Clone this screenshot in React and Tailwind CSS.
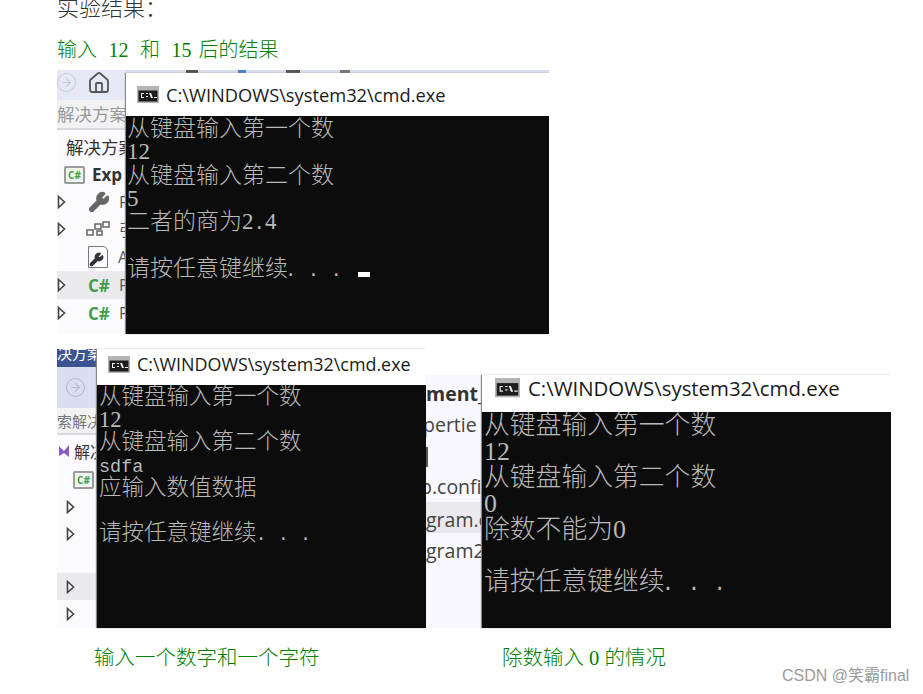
import React from "react";
import { Home, Wrench, ArrowRight } from "lucide-react";

const CJK = '"Noto Sans CJK SC","Noto Sans",sans-serif';

function CmdIcon({ w = 22 }) {
  return (
    <svg width={w} height={(w * 17) / 22} viewBox="0 0 22 17" className="shrink-0">
      <rect x="0" y="0" width="22" height="17" fill="#b4b4b4" />
      <rect x="1.5" y="4.5" width="19" height="11" fill="#1c1c1c" />
      <path d="M4 7h3v1H5v3h2v1H4zM9 7h2v1H9zM9 10h2v1H9zM12 7h2l2 5h-2zM17 11h3v1h-3z" fill="#eee" />
    </svg>
  );
}

function Tri() {
  return (
    <svg width="9" height="14" viewBox="0 0 9 14">
      <path d="M1.5 1.5 L7.5 7 L1.5 12.5 Z" fill="#fff" stroke="#444" strokeWidth="1.6" />
    </svg>
  );
}

function Console({ size, lh, lines, titleH, titleSize, iconW, titlePad, gap, bottom, cursor, pad, ptop }) {
  return (
    <div className="flex flex-col flex-1 min-w-0 bg-white shadow-[-1px_0_1px_#888]">
      <div
        style={{ height: titleH, paddingLeft: titlePad, gap, paddingBottom: bottom }}
        className="flex items-center text-[#1a1a1a] shrink-0 font-['Open_Sans',sans-serif] bg-white"
      >
        <CmdIcon w={iconW} />
        <span style={{ fontSize: titleSize }} className="whitespace-nowrap">C:\WINDOWS\system32\cmd.exe</span>
      </div>
      <div
        style={{ fontSize: size, lineHeight: lh + "px", paddingLeft: pad, paddingTop: ptop }}
        className="flex-1 bg-[#0c0c0c] text-[#b9b9b9] font-['Liberation_Serif','Noto_Sans_CJK_SC',sans-serif] font-light overflow-hidden relative"
      >
        {lines.map((l, i) => (
          <div key={i} style={{ height: lh }} className="whitespace-pre">{l}</div>
        ))}
        {cursor}
      </div>
    </div>
  );
}

function Dots({ size, shift }) {
  return (
    <span style={{ fontSize: size, marginLeft: shift }} className="font-['Liberation_Mono',monospace]">. . .</span>
  );
}

function Row({ h, tri, icon, label, hi, labelCn }) {
  return (
    <div style={{ height: h }} className={"flex items-center whitespace-nowrap overflow-hidden " + (hi ? "bg-[#e9e9ee]" : "")}>
      <span className="w-[9px] shrink-0 flex items-center">{tri && <Tri />}</span>
      {icon}
      {label && <span className={labelCn}>{label}</span>}
    </div>
  );
}

const CSharp = () => (
  <span className="ml-[22px] w-[31px] shrink-0 text-[17px] leading-none font-bold text-[#3f9f4f] font-['Open_Sans',sans-serif]">C#</span>
);

function Box() {
  return (
    <span className="flex items-center justify-center w-[21px] h-[18px] border-2 border-[#9a9a9a] rounded-[2px] bg-[#eef5ee] text-[10px] leading-none font-bold text-[#3f9f4f] font-['Open_Sans',sans-serif] shrink-0">C#</span>
  );
}

const latinLabel = "text-[16px] text-[#555] font-['Open_Sans',sans-serif]";

export default function App() {
  return (
    <div style={{ fontFamily: CJK }} className="relative w-[923px] h-[694px] overflow-hidden bg-white pl-[57px]">
      <p className="h-[19px] -mt-[2px] text-[22px] leading-[22px] text-[#333] font-['Liberation_Serif','Noto_Sans_CJK_SC',serif] font-light">实验结果：</p>
      <p className="mt-[21px] h-[32px] text-[20px] leading-[24px] text-[#008000] font-['Liberation_Serif','Noto_Sans_CJK_SC',serif] font-light whitespace-pre [word-spacing:6.5px]">
        输入 12 和 15<span className="ml-[7px]">后的结果</span>
      </p>

      {/* first capture */}
      <div className="flex w-[492px] h-[264px]">
        <div className="w-[69px] shrink-0 flex flex-col overflow-hidden bg-[#fafaff]">
          <div className="h-[30px] bg-[#e6e9f5] flex items-center gap-[11px] text-[#555] pb-[5px]">
            <span className="w-[19px] h-[19px] rounded-full border border-[#c5c8d6] flex items-center justify-center shrink-0"><ArrowRight size={13} color="#c5c8d6" /></span>
            <Home size={24} strokeWidth={1.8} className="shrink-0" />
          </div>
          <div className="h-[30px] bg-[#f2f2f5] border-b-2 border-[#d8d8de] text-[17.5px] leading-[28px] text-[#999] whitespace-nowrap">解决方案</div>
          <div className="h-[31px] pl-[9px] text-[17.5px] leading-[33px] text-[#333] whitespace-nowrap">解决方案</div>
          <div className="h-[27px] flex items-center pl-[7px] gap-[7px] whitespace-nowrap">
            <Box />
            <span className="text-[17px] font-bold text-[#333] font-['Open_Sans',sans-serif]">Exp</span>
          </div>
          <Row h={27} tri icon={<Wrench size={22} color="#666" fill="#666" className="ml-[22px] mr-[9px] shrink-0" />} label="P" labelCn={latinLabel} />
          <Row h={28} tri icon={
            <svg width="24" height="16" viewBox="0 0 24 16" className="ml-[20px] mr-[9px] shrink-0" fill="none" stroke="#666" strokeWidth="1.5">
              <rect x="1" y="9" width="6" height="5" /><rect x="9" y="3" width="6" height="5" /><rect x="17" y="1" width="6" height="5" /><rect x="11" y="10" width="5" height="4" />
            </svg>
          } label="引" labelCn="text-[16px] text-[#555]" />
          <Row h={28} icon={
            <span className="ml-[22px] mr-[10px] w-[20px] h-[22px] border border-[#777] rounded-tr-[5px] flex items-end shrink-0"><Wrench size={15} color="#333" fill="#333" /></span>
          } label="A" labelCn={latinLabel} />
          <Row h={28} hi tri icon={<CSharp />} label="P" labelCn={latinLabel} />
          <Row h={28} tri icon={<CSharp />} label="P" labelCn={latinLabel} />
        </div>
        <div className="flex-1 min-w-0 flex flex-col">
          <div className="h-[3px] bg-[#d9dcec] shrink-0 flex gap-[40px] pl-[60px]">
            <span className="w-[12px] bg-[#555]" /><span className="w-[8px] bg-[#4a7fd0]" /><span className="w-[14px] bg-[#555]" /><span className="w-[10px] bg-[#777]" />
          </div>
          <Console
            size={23} lh={23.3} titleH={43} titleSize={18.3} iconW={22} titlePad={11} gap={7} bottom={0} pad={1} ptop={1}
            lines={[
              "从键盘输入第一个数", "12", "从键盘输入第二个数", "5",
              <span key="r">二者的商为2<span className="font-['Liberation_Mono',monospace] text-[19px]">.</span>4</span>,
              "",
              <span key="a">请按任意键继续<Dots size={19} shift={-3} /></span>,
            ]}
            cursor={<span className="absolute left-[232px] top-[156px] w-[12px] h-[5px] bg-white" />}
          />
        </div>
      </div>

      {/* second row */}
      <div className="flex mt-[15px] h-[279px]">
        <div className="flex w-[369px] h-full shrink-0">
          <div className="w-[40px] shrink-0 flex flex-col overflow-hidden bg-[#fafaff]">
            <div className="h-[18px] bg-[#3d5390] text-white text-[15px] leading-[8px] whitespace-nowrap overflow-hidden">决方案</div>
            <div className="h-[41px] bg-[#d9def0] flex items-center pl-[9px]">
              <span className="w-[19px] h-[19px] rounded-full border border-[#b3b8cc] flex items-center justify-center"><ArrowRight size={13} color="#b3b8cc" /></span>
            </div>
            <div className="h-[27px] bg-[#f2f2f5] border-b-2 border-[#d8d8de] text-[15px] leading-[26px] text-[#777] whitespace-nowrap">索解决</div>
            <div className="h-[31px] flex items-center gap-[3px] whitespace-nowrap">
              <svg width="14" height="16" viewBox="0 0 14 16" className="shrink-0"><path d="M2 3l5 5 5-6v12l-5-4-5 3z" fill="#8a5cc0" /></svg>
              <span className="text-[16px] text-[#333]">解决</span>
            </div>
            <div className="h-[27px] flex items-center pl-[16px]"><Box /></div>
            <div className="h-[27px] flex items-center pl-[9px]"><Tri /></div>
            <div className="h-[27px] flex items-center pl-[9px]"><Tri /></div>
            <div className="h-[26px]" />
            <div className="h-[27px] flex items-center pl-[9px] bg-[#e9e9ee]"><Tri /></div>
            <div className="h-[28px] flex items-center pl-[9px]"><Tri /></div>
          </div>
          <Console
            size={22.5} lh={22.7} titleH={36} titleSize={17.9} iconW={22} titlePad={11} gap={7} bottom={6} pad={2} ptop={1}
            lines={[
              "从键盘输入第一个数", "12", "从键盘输入第二个数",
              <span key="s" className="font-['Liberation_Mono',monospace] text-[18.5px]">sdfa</span>,
              "应输入数值数据", "",
              <span key="a">请按任意键继续<Dots size={18.5} shift={-1} /></span>,
            ]}
          />
        </div>
        <div className="flex w-[465px] mt-[26px] h-[253px]">
          <div className="w-[56px] shrink-0 flex flex-col overflow-hidden bg-[#f8f8fe] text-[#444] text-[19.5px] font-['Open_Sans',sans-serif] whitespace-nowrap">
            <div className="h-[35px] leading-[37px] font-bold text-[#333]">ment_</div>
            <div className="h-[31px] leading-[30px] -ml-[3px]">pertie</div>
            <div className="h-[31px] flex items-center"><span className="w-[2px] h-[20px] bg-[#555]" /></div>
            <div className="h-[30px] leading-[30px] -ml-[6px]">p.confi</div>
            <div className="h-[31px] leading-[35px] bg-[#e9e9ee]">gram.c</div>
            <div className="h-[31px] leading-[35px]">gram2</div>
          </div>
          <Console
            size={25.8} lh={26} titleH={37} titleSize={20.4} iconW={25} titlePad={13} gap={8} bottom={11} pad={2} ptop={1}
            lines={[
              "从键盘输入第一个数", "12", "从键盘输入第二个数", "0", "除数不能为0", "",
              <span key="a">请按任意键继续<Dots size={21.5} shift={-3} /></span>,
            ]}
          />
        </div>
      </div>

      {/* captions */}
      <div className="flex mt-[18px] text-[20.5px] leading-[24px] text-[#008000] font-['Liberation_Serif','Noto_Sans_CJK_SC',serif] font-light whitespace-pre">
        <span className="ml-[37px] w-[408px]">输入一个数字和一个字符</span>
        <span>除数输入 0 的情况</span>
      </div>

      <div className="absolute left-[782px] top-[667px] text-[16px] leading-[18px] text-[#9a9a9a] whitespace-nowrap font-['Liberation_Sans','Noto_Sans_CJK_SC',sans-serif]">CSDN @笑霸final</div>
    </div>
  );
}
